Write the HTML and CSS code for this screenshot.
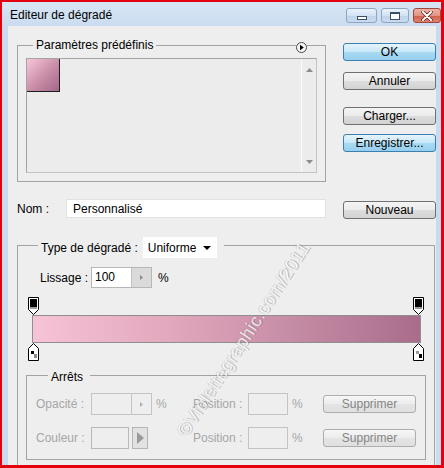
FILE: index.html
```html
<!DOCTYPE html>
<html>
<head>
    <title>Editeur de dégradé</title>
    <link rel="stylesheet" href="styles.css">
</head>
<body>
<div class="window">
    <div class="titlebar">
        <span class="title">Editeur de dégradé</span>
        <div class="caption-btns">
            <span class="cap cap-min"><i></i></span>
            <span class="cap cap-max"><i></i></span>
            <span class="cap cap-close">
                <svg width="12" height="10" viewBox="0 0 12 10"><path d="M2 1 L10 9 M10 1 L2 9" stroke="#5a1e18" stroke-width="3.4" stroke-linecap="round"/><path d="M2 1 L10 9 M10 1 L2 9" stroke="#fff" stroke-width="2" stroke-linecap="round"/></svg>
            </span>
        </div>
    </div>

    <div class="client">
        <div class="top">
            <div class="preset-wrap">
                <fieldset class="group presets">
                    <legend>Paramètres prédéfinis</legend>
                    <div class="listbox">
                        <div class="swatch"></div>
                        <div class="scroll">
                            <svg width="7" height="4" viewBox="0 0 7 4"><path d="M0 4 L3.5 0 L7 4 Z" fill="#8c8c8c"/></svg>
                            <svg width="7" height="4" viewBox="0 0 7 4"><path d="M0 0 L3.5 4 L7 0 Z" fill="#8c8c8c"/></svg>
                        </div>
                    </div>
                </fieldset>
                <span class="menu-btn">
                    <svg width="11" height="11" viewBox="0 0 11 11"><circle cx="5.5" cy="5.5" r="5" fill="#f4f4f4" stroke="#4a4a4a"/><path d="M4 2.8 L7.8 5.5 L4 8.2 Z" fill="#000"/></svg>
                </span>
            </div>
            <div class="actions">
                <button class="btn btn-blue">OK</button>
                <button class="btn gap-annuler">Annuler</button>
                <button class="btn gap-charger">Charger...</button>
                <button class="btn btn-blue gap-enreg">Enregistrer...</button>
            </div>
        </div>

        <div class="name-row">
            <label class="name-label" for="gradName">Nom :</label>
            <input class="text-field" id="gradName" type="text" value="Personnalisé">
            <button class="btn btn-new">Nouveau</button>
        </div>

        <fieldset class="group gradient">
            <legend>
                <span>Type de dégradé :</span>
                <span class="dropdown">Uniforme
                    <svg width="8" height="4" viewBox="0 0 8 4"><path d="M0 0 L8 0 L4 4 Z" fill="#000"/></svg>
                </span>
            </legend>

            <div class="smooth-row">
                <span class="smooth-label">Lissage :</span>
                <div class="spin">
                    <span class="spin-value">100</span>
                    <span class="spin-arrow"><svg width="3" height="5" viewBox="0 0 3 5"><path d="M0 0 L3 2.5 L0 5 Z" fill="#8a8a8a"/></svg></span>
                </div>
                <span class="pct">%</span>
            </div>

            <div class="ramp">
                <div class="stops">
                    <svg width="12" height="18" viewBox="0 0 12 18"><path d="M0.5 0.5 H10.5 V12.5 L5.5 17.5 L0.5 12.5 Z" fill="#fff" stroke="#000"/><rect x="2" y="2" width="7" height="8" fill="#000"/><rect x="2" y="10" width="7" height="2" fill="#9a9a9a"/></svg>
                    <svg width="12" height="18" viewBox="0 0 12 18"><path d="M0.5 0.5 H10.5 V12.5 L5.5 17.5 L0.5 12.5 Z" fill="#fff" stroke="#000"/><rect x="2" y="2" width="7" height="8" fill="#000"/><rect x="2" y="10" width="7" height="2" fill="#9a9a9a"/></svg>
                </div>
                <div class="ramp-bar"></div>
                <div class="stops">
                    <svg width="12" height="18" viewBox="0 0 12 18"><path d="M5.5 0.5 L10.5 5.5 V17.5 H0.5 V5.5 Z" fill="#fff" stroke="#000"/><rect x="3" y="8" width="3" height="3" fill="#000"/><rect x="6" y="11" width="3" height="4" fill="#8a8a8a"/></svg>
                    <svg width="12" height="18" viewBox="0 0 12 18"><path d="M5.5 0.5 L10.5 5.5 V17.5 H0.5 V5.5 Z" fill="#fff" stroke="#000"/><rect x="3" y="8" width="3" height="3" fill="#9a9a9a"/><rect x="6" y="11" width="3" height="4" fill="#000"/></svg>
                </div>
            </div>

            <fieldset class="group stops-box">
                <legend>Arrêts</legend>
                <div class="stop-row">
                    <span class="dim-label">Opacité :</span>
                    <div class="ctrl-cell">
                        <div class="spin spin-off">
                            <span class="spin-value"></span>
                            <span class="spin-arrow"><svg width="3" height="5" viewBox="0 0 3 5"><path d="M0 0 L3 2.5 L0 5 Z" fill="#b0b0b0"/></svg></span>
                        </div>
                        <span class="dim-pct">%</span>
                    </div>
                    <span class="dim-label">Position :</span>
                    <span class="small-field"></span>
                    <span class="dim-pct pct-wide">%</span>
                    <button class="btn btn-off">Supprimer</button>
                </div>
                <div class="stop-row second">
                    <span class="dim-label">Couleur :</span>
                    <div class="ctrl-cell">
                        <span class="color-box"></span>
                        <span class="color-arrow"><svg width="7" height="12" viewBox="0 0 7 12"><path d="M0 0 L7 6 L0 12 Z" fill="#9a9a9a"/></svg></span>
                    </div>
                    <span class="dim-label">Position :</span>
                    <span class="small-field"></span>
                    <span class="dim-pct pct-wide">%</span>
                    <button class="btn btn-off">Supprimer</button>
                </div>
            </fieldset>
        </fieldset>
    </div>

    <div class="watermark">©Violettegraphic.com/2011</div>
</div>
</body>
</html>
```

FILE: styles.css
```css
* { box-sizing: border-box; }
body { margin: 0; font-family: "Liberation Sans", Arial, sans-serif; font-size: 12px; color: #000; }

.window { position: relative; width: 444px; height: 468px; border: solid #e3000f; border-width: 2px 3px 3px 2px; background: #c9dcef; display: flex; flex-direction: column; overflow: hidden; }

/* title bar */
.titlebar { height: 24px; flex: none; display: flex; justify-content: space-between; align-items: flex-start; padding-left: 8px; background: linear-gradient(#d7e6f5, #cadcef); }
.title { margin-top: 6px; line-height: 14px; font-size: 12px; }
.caption-btns { display: flex; gap: 4px; margin-top: 6px; }
.cap { height: 15px; width: 28px; border: 1px solid #8ea6c2; border-radius: 3px; display: flex; align-items: center; justify-content: center; background: linear-gradient(#eaf2fb, #d3e2f2 50%, #bfd3e9 51%, #c9dbef); }
.cap-min { width: 31px; }
.cap-min i { display: block; width: 10px; height: 4px; margin-top: 4px; border: 1px solid #3c4e66; background: #fff; }
.cap-max i { display: block; width: 10px; height: 8px; border: 1px solid #3c4e66; border-top-width: 2px; background: #fff; }
.cap-close { border-color: #a0463a; background: linear-gradient(#eeb3a6, #e29584 50%, #d0604b 51%, #dc8370); }

/* client area */
.client { flex: 1; margin: 0 5px 0 6px; padding: 12px 0 0 9px; background: #eeeeee; overflow: hidden; }

.group { margin: 0; border: 1px solid #a3a3a3; min-width: 0; }
.group legend { margin-left: 7px; padding: 0 3px; line-height: 14px; }

.top { display: grid; grid-template-columns: 309px 93px; column-gap: 17px; align-items: start; }
.preset-wrap { position: relative; }
.presets { height: 144px; padding: 6px 8px 8px; }
.menu-btn { position: absolute; left: 279px; top: 4px; display: block; width: 11px; height: 11px; line-height: 0; background: #eeeeee; }
.listbox { height: 115px; border: 1px solid #a3a3a3; border-right-color: #c4c4c4; border-bottom-color: #c4c4c4; background: #ececec; display: flex; justify-content: space-between; }
.swatch { width: 33px; height: 33px; background: linear-gradient(135deg, #f8c7d9, #c88ca7 55%, #a4678a); border-right: 1px solid #1e1e1e; border-bottom: 1px solid #1e1e1e; }
.scroll { width: 15px; border-left: 1px solid #fafafa; display: flex; flex-direction: column; justify-content: space-between; align-items: center; padding: 9px 0 8px; }

.actions { display: flex; flex-direction: column; padding-top: 5px; }

.btn { width: 93px; height: 18px; padding: 0; font: inherit; line-height: 16px; color: #000; border: 1px solid #707070; border-radius: 3px; background: linear-gradient(#f4f4f4, #ebebeb 50%, #dddddd 51%, #d2d2d2); }
.btn-blue { border-color: #3c7fb1; background: linear-gradient(#e5f4fc, #c6e7f8 50%, #a9daf3 51%, #97cfee); }
.gap-annuler { margin-top: 11px; }
.gap-charger { margin-top: 17px; }
.gap-enreg { margin-top: 9px; }

/* name row */
.name-row { display: flex; align-items: flex-start; margin-top: 17px; }
.name-label { width: 49px; line-height: 19px; margin-top: 1px; }
.text-field { width: 260px; height: 19px; padding: 0 6px; font: inherit; border: 1px solid #e2e2e2; background: #fff; outline: none; }
.btn-new { margin: 2px 0 0 17px; }

/* gradient group */
.gradient { width: 418px; margin-top: 14px; padding: 9px 8px 20px; }
.gradient legend { display: flex; align-items: center; gap: 5px; margin-left: 12px; padding: 4px 7px 0 3px; }
.dropdown { display: flex; align-items: center; justify-content: space-between; width: 74px; height: 21px; padding: 0 6px 0 5px; background: #fff; }

.smooth-row { display: flex; align-items: center; margin-left: 14px; }
.smooth-label { width: 51px; }
.spin { display: flex; width: 61px; height: 21px; border: 1px solid #b6b6b6; background: #fff; }
.spin-value { flex: 1; padding-left: 3px; line-height: 19px; }
.spin-arrow { width: 20px; display: flex; align-items: center; justify-content: center; background: #dadada; border-left: 1px solid #c2c2c2; }
.pct { margin-left: 6px; }

.ramp { width: 397px; margin: 9px 0 0 2px; }
.stops { display: flex; justify-content: space-between; height: 18px; }
.stops svg { display: block; }
.ramp-bar { height: 28px; margin: 0 4px 0 4px; border: 1px solid #8f8f8f; background: linear-gradient(to right, #f7c3d6, #e2a8bd 35%, #c78ea7 65%, #a96d8b); }

/* stops box */
.stops-box { width: 400px; margin-top: 5px; padding: 9px 9px 10px; }
.stop-row { display: flex; align-items: center; height: 22px; }
.stop-row.second { margin-top: 12px; }
.dim-label { width: 55px; color: #a6a6a6; }
.ctrl-cell { width: 102px; display: flex; align-items: center; }
.spin-off { background: transparent; border-color: #c4c4c4; height: 22px; }
.spin-off .spin-arrow { background: transparent; border-left-color: #c4c4c4; }
.dim-pct { margin-left: 4px; color: #a6a6a6; }
.pct-wide { width: 31px; margin-left: 4px; }
.small-field { width: 40px; height: 22px; border: 1px solid #c4c4c4; }
.color-box { width: 38px; height: 22px; border: 1px solid #b8b8b8; }
.color-arrow { width: 16px; height: 22px; margin-left: 3px; display: flex; align-items: center; justify-content: center; border: 1px solid #b4b4b4; background: #e2e2e2; }
.btn-off { color: #858585; border-color: #adadad; background: linear-gradient(#f6f6f6, #ececec 50%, #e4e4e4 51%, #e0e0e0); }

/* watermark over the dialog */
.watermark { position: absolute; left: 102px; top: 327px; width: 280px; text-align: center; font-size: 18px; letter-spacing: 0.5px; color: rgba(255, 255, 255, 0.75); text-shadow: 1px 1px 0 rgba(110, 110, 110, 0.4), -1px -1px 0 rgba(110, 110, 110, 0.2); transform: rotate(-57deg); pointer-events: none; }
```
